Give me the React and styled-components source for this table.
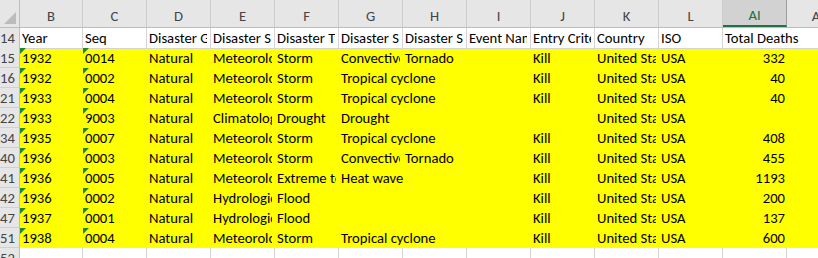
import React from 'react';
import styled, { createGlobalStyle } from 'styled-components';

const Global = createGlobalStyle`
  html, body { margin: 0; padding: 0; background: #ffffff; }
  body { font-family: "Carlito", "Liberation Sans", Arial, sans-serif; }
`;

const TEMPLATE = '20px 63px repeat(12, 64px)';

const Sheet = styled.div`
  width: 818px;
  height: 258px;
  overflow: hidden;
  background: #ffffff;
  font-size: 14.67px;
  color: #000;
`;

const Row = styled.div`
  display: grid;
  grid-template-columns: ${TEMPLATE};
  height: ${(p) => p.$h || 20}px;
  width: max-content;
  background: ${(p) => (p.$fill ? '#ffff00' : '#ffffff')};
`;

const HeaderBand = styled(Row)`
  background: #e6e6e6;
  border-bottom: 1px solid #bdbdbd;
  box-sizing: border-box;
`;

const Corner = styled.div`
  position: relative;
  border-right: 1px solid #bdbdbd;
  box-sizing: border-box;
`;

const CornerTri = styled.svg`
  position: absolute;
  left: 4px;
  top: 12px;
`;

const ColHead = styled.div`
  box-sizing: border-box;
  border-right: 1px solid ${(p) => (p.$sel ? '#9e9e9e' : '#cdcdcd')};
  background: ${(p) => (p.$sel ? '#d2d2d2' : 'transparent')};
  border-bottom: ${(p) => (p.$sel ? '2px solid #217346' : 'none')};
  color: ${(p) => (p.$sel ? '#217346' : '#444444')};
  display: flex;
  align-items: flex-end;
  justify-content: center;
  padding-bottom: ${(p) => (p.$sel ? 2 : 3)}px;
  line-height: 15px;
  white-space: nowrap;
`;

const RowHead = styled.div`
  box-sizing: border-box;
  background: #e6e6e6;
  border-right: 1px solid #bdbdbd;
  border-bottom: 1px solid #d0d0d0;
  color: #444444;
  text-align: right;
  padding: 0 6px 0 0;
  line-height: 20px;
  white-space: nowrap;
  overflow: hidden;
`;

const Cell = styled.div`
  position: relative;
  box-sizing: border-box;
  padding: 0 ${(p) => (p.$num ? 2 : 3)}px 0 2px;
  line-height: 20px;
  white-space: nowrap;
  text-align: ${(p) => (p.$num ? 'right' : 'left')};
  border-right: ${(p) => (p.$grid && !p.$spill ? '1px solid #d4d4d4' : 'none')};
  border-bottom: ${(p) => (p.$grid ? '1px solid #d4d4d4' : 'none')};
  z-index: ${(p) => (p.$spill ? 1 : 0)};
`;

const Text = styled.span`
  display: block;
  overflow: ${(p) => (p.$spill ? 'visible' : 'hidden')};
`;

const Flag = styled.svg`
  position: absolute;
  left: 0;
  top: 0;
`;

const COLS = ['B', 'C', 'D', 'E', 'F', 'G', 'H', 'I', 'J', 'K', 'L', 'AI', 'AJ'];

const HEAD = ['Year', 'Seq', 'Disaster Group', 'Disaster Subgroup', 'Disaster Type', 'Disaster Subtype', 'Disaster Subsubtype', 'Event Name', 'Entry Criteria', 'Country', 'ISO', 'Total Deaths', ''];

const US = 'United States of America (the)';

const DATA = [
  ['15', '1932', '0014', 'Natural', 'Meteorological', 'Storm', 'Convective storm', 'Tornado', '', 'Kill', US, 'USA', '332'],
  ['16', '1932', '0002', 'Natural', 'Meteorological', 'Storm', 'Tropical cyclone', '', '', 'Kill', US, 'USA', '40'],
  ['21', '1933', '0004', 'Natural', 'Meteorological', 'Storm', 'Tropical cyclone', '', '', 'Kill', US, 'USA', '40'],
  ['22', '1933', '9003', 'Natural', 'Climatological', 'Drought', 'Drought', '', '', '', US, 'USA', ''],
  ['34', '1935', '0007', 'Natural', 'Meteorological', 'Storm', 'Tropical cyclone', '', '', 'Kill', US, 'USA', '408'],
  ['40', '1936', '0003', 'Natural', 'Meteorological', 'Storm', 'Convective storm', 'Tornado', '', 'Kill', US, 'USA', '455'],
  ['41', '1936', '0005', 'Natural', 'Meteorological', 'Extreme temperature', 'Heat wave', '', '', 'Kill', US, 'USA', '1193'],
  ['42', '1936', '0002', 'Natural', 'Hydrological', 'Flood', '', '', '', 'Kill', US, 'USA', '200'],
  ['47', '1937', '0001', 'Natural', 'Hydrological', 'Flood', '', '', '', 'Kill', US, 'USA', '137'],
  ['51', '1938', '0004', 'Natural', 'Meteorological', 'Storm', 'Tropical cyclone', '', '', 'Kill', US, 'USA', '600'],
];

function DataRow({ num, values, fill, flags }) {
  const full = [...values];
  while (full.length < COLS.length) full.push('');
  return (
    <Row $fill={fill}>
      <RowHead>{num}</RowHead>
      {full.map((v, i) => {
        const isNum = i === 11 && fill;
        const spill = v !== '' && !isNum && (full[i + 1] === '' || full[i + 1] === undefined);
        return (
          <Cell key={i} $grid={!fill} $spill={spill} $num={isNum}>
            {flags && i < 2 && (
              <Flag width="6" height="6" viewBox="0 0 6 6">
                <polygon points="0,0 6,0 0,6" fill="#1e8a2c" />
              </Flag>
            )}
            <Text $spill={spill}>{v}</Text>
          </Cell>
        );
      })}
    </Row>
  );
}

export default function App() {
  return (
    <>
      <Global />
      <Sheet>
        <HeaderBand $h={28}>
          <Corner>
            <CornerTri width="12" height="12" viewBox="0 0 12 12">
              <polygon points="12,0 12,12 0,12" fill="#bcbcbc" />
            </CornerTri>
          </Corner>
          {COLS.map((c) => (
            <ColHead key={c} $sel={c === 'AI'}>{c}</ColHead>
          ))}
        </HeaderBand>
        <DataRow num="14" values={HEAD} fill={false} />
        {DATA.map((r) => (
          <DataRow key={r[0]} num={r[0]} values={r.slice(1)} fill flags />
        ))}
        <DataRow num="52" values={[]} fill={false} />
      </Sheet>
    </>
  );
}
